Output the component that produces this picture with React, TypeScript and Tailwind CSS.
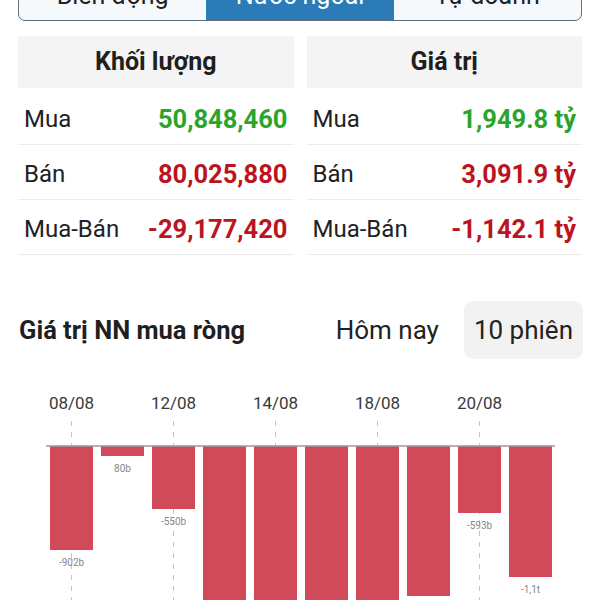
import React from "react";

type StatRow = {
  label: string;
  value: string;
  tone: "up" | "down";
};

type Bar = {
  value: number;
  label?: string;
  date?: string;
};

const volumeRows: StatRow[] = [
  { label: "Mua", value: "50,848,460", tone: "up" },
  { label: "Bán", value: "80,025,880", tone: "down" },
  { label: "Mua-Bán", value: "-29,177,420", tone: "down" },
];

const valueRows: StatRow[] = [
  { label: "Mua", value: "1,949.8 tỷ", tone: "up" },
  { label: "Bán", value: "3,091.9 tỷ", tone: "down" },
  { label: "Mua-Bán", value: "-1,142.1 tỷ", tone: "down" },
];

// bar bottoms measured in px below the zero line
const bars: Bar[] = [
  { value: 104, label: "-902b", date: "08/08" },
  { value: 10, label: "80b" },
  { value: 63, label: "-550b", date: "12/08" },
  { value: 160 },
  { value: 160, date: "14/08" },
  { value: 160 },
  { value: 160, date: "18/08" },
  { value: 150 },
  { value: 67, label: "-593b", date: "20/08" },
  { value: 131, label: "-1,1t" },
];

function StatPanel({ title, rows }: { title: string; rows: StatRow[] }) {
  return (
    <div className="flex flex-col">
      <div className="flex h-[52px] items-center justify-center bg-[#f4f4f4] text-[25px] font-bold text-[#1f1f1f]">
        {title}
      </div>
      <div className="pt-[2px]">
        {rows.map((row) => (
          <div
            key={row.label}
            className="flex h-[55px] items-center justify-between border-b border-[#ececec] px-[6px] pt-[4px]"
          >
            <span className="text-[24px] text-[#222]">{row.label}</span>
            <span
              className={`text-[25.5px] font-bold ${
                row.tone === "up" ? "text-[#2aa52a]" : "text-[#bb1420]"
              }`}
            >
              {row.value}
            </span>
          </div>
        ))}
      </div>
    </div>
  );
}

function NetChart() {
  const zeroY = 65;
  const pitch = 51;
  const startX = 50;
  const barW = 43;

  return (
    <svg width="600" height="220" viewBox="0 0 600 220" className="block">
      {bars.map((bar, i) => {
        if (!bar.date) return null;
        const cx = startX + i * pitch + barW / 2;
        return (
          <g key={`d-${i}`}>
            <line x1={cx} y1={40} x2={cx} y2={220} stroke="#c4c4c4" strokeWidth="1" strokeDasharray="5 6" />
            <text x={cx} y={28} textAnchor="middle" fontSize="17" fill="#3a3a3a" fontFamily="Roboto, sans-serif">
              {bar.date}
            </text>
          </g>
        );
      })}
      {bars.map((bar, i) => {
        const x = startX + i * pitch;
        return (
          <g key={`b-${i}`}>
            <rect x={x} y={zeroY} width={barW} height={bar.value} fill="#d04a5a" />
            {bar.label ? (
              <text
                x={x + barW / 2}
                y={zeroY + bar.value + 16}
                textAnchor="middle"
                fontSize="10"
                fill="#888"
                fontFamily="Roboto, sans-serif"
              >
                {bar.label}
              </text>
            ) : null}
          </g>
        );
      })}
      <line x1={46} y1={zeroY} x2={555} y2={zeroY} stroke="#9a9a9a" strokeWidth="1.5" />
    </svg>
  );
}

export default function App() {
  const tabs = ["Biến động", "Nước ngoài", "Tự doanh"];

  return (
    <main className="h-[600px] w-[600px] overflow-hidden bg-white font-['Roboto',sans-serif]">
      <div className="px-[18px]">
        <div className="mt-[-29px] flex h-[50px] overflow-hidden rounded-b-[7px] border border-[#5d6f7e] bg-[#f6f9fb]">
          {tabs.map((tab, i) => (
            <div
              key={tab}
              className={`flex flex-1 items-center justify-center text-[25px] ${
                i === 1 ? "bg-[#2a7bb8] text-white" : "text-[#222]"
              }`}
            >
              {tab}
            </div>
          ))}
        </div>
      </div>

      <div className="mt-[15px] grid grid-cols-2 gap-[13px] px-[18px]">
        <StatPanel title="Khối lượng" rows={volumeRows} />
        <StatPanel title="Giá trị" rows={valueRows} />
      </div>

      <div className="mt-[45px] flex h-[60px] items-center justify-between pl-[19px] pr-[17px]">
        <div className="text-[25.5px] font-bold text-[#1f1f1f]">Giá trị NN mua ròng</div>
        <div className="flex items-center">
          <span className="px-[12px] text-[26px] text-[#222]">Hôm nay</span>
          <span className="ml-[13px] flex h-[58px] items-center rounded-[9px] bg-[#f2f2f2] px-[10px] text-[26px] text-[#222]">
            10 phiên
          </span>
        </div>
      </div>

      <div className="mt-[21px]">
        <NetChart />
      </div>
    </main>
  );
}
